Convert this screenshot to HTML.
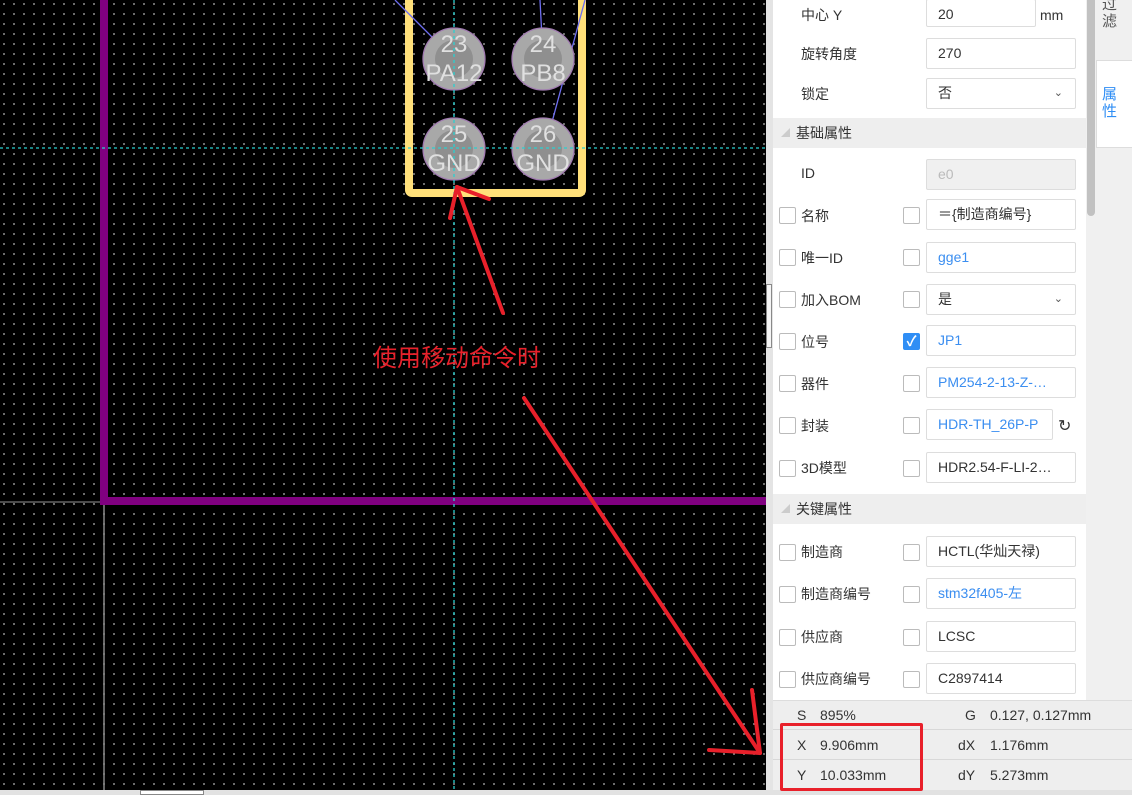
<!DOCTYPE html>
<html><head><meta charset="utf-8">
<style>
*{margin:0;padding:0;box-sizing:border-box}
body{width:1132px;height:795px;overflow:hidden;position:relative;background:#fff;font-family:"Liberation Sans","Noto Sans CJK SC",sans-serif;font-size:14px;color:#333}
#cv{position:absolute;left:0;top:0;width:766px;height:790px;background-color:#000;background-image:radial-gradient(circle,#8a8a8a 0.8px,transparent 1.1px);background-size:10px 10px;background-position:-1px -1px;overflow:hidden}
.abs{position:absolute}
.lbl{position:absolute;left:801px;font-size:14px;color:#333}
.cb{position:absolute;width:17px;height:17px;border:1px solid #bbb;border-radius:2px;background:#fff}
.inp{position:absolute;left:926px;width:150px;height:31px;border:1px solid #ddd;border-radius:2px;background:#fff;padding-left:11px;line-height:29px;font-size:14px;color:#333;white-space:nowrap;overflow:hidden}
.blue{color:#3b8ef0}
.sec{position:absolute;left:773px;width:313px;height:30px;background:#eee;line-height:30px;padding-left:23px;font-size:14px}
.sec:before{content:"";position:absolute;left:8px;top:10px;border-left:9px solid transparent;border-bottom:9px solid #ccc}
.chev{position:absolute;right:12px;top:0;font-size:11px;color:#555}
.st{position:absolute;font-size:14px;color:#333}
</style></head><body>
<div id="cv">
<svg width="766" height="790" style="position:absolute;left:0;top:0">
<line x1="0" y1="502" x2="104" y2="502" stroke="#999" stroke-width="1"/>
<line x1="104" y1="505" x2="104" y2="790" stroke="#888" stroke-width="1.5"/>
<polyline points="104,0 104,501 766,501" fill="none" stroke="#800080" stroke-width="8"/>
<rect x="409" y="-10" width="173" height="203" rx="3" fill="none" stroke="#ffe07a" stroke-width="8"/>
<line x1="395" y1="0" x2="452" y2="57" stroke="#6e6ef0" stroke-width="1.3"/>
<line x1="540" y1="0" x2="543" y2="58" stroke="#6e6ef0" stroke-width="1.3"/>
<line x1="585" y1="0" x2="545" y2="148" stroke="#6e6ef0" stroke-width="1.3"/>
<g fill="#a8a8a8" stroke="#a07ab0" stroke-width="1.3">
<circle cx="454" cy="59" r="31"/><circle cx="543" cy="59" r="31"/>
<circle cx="454" cy="149" r="31"/><circle cx="543" cy="149" r="31"/></g>
<g fill="#8f8f8f"><circle cx="454" cy="59" r="19"/><circle cx="543" cy="59" r="19"/>
<circle cx="454" cy="149" r="19"/><circle cx="543" cy="149" r="19"/></g>
<line x1="454" y1="0" x2="454" y2="790" stroke="#2ad0d0" stroke-width="1.3" stroke-dasharray="3,3"/>
<line x1="0" y1="148" x2="766" y2="148" stroke="#2ad0d0" stroke-width="1.3" stroke-dasharray="3,3"/>
<g fill="#e0e0e0" font-family="Liberation Sans,sans-serif" font-size="24" text-anchor="middle">
<text x="454" y="52">23</text><text x="454" y="81">PA12</text>
<text x="543" y="52">24</text><text x="543" y="81">PB8</text>
<text x="454" y="142">25</text><text x="454" y="171">GND</text>
<text x="543" y="142">26</text><text x="543" y="171">GND</text></g>
<g stroke="#e8202a" stroke-width="4" stroke-linecap="round" fill="none">
<line x1="503" y1="313" x2="457" y2="187"/>
<line x1="457" y1="187" x2="450" y2="218"/>
<line x1="457" y1="187" x2="489" y2="199"/>
<line x1="524" y1="398" x2="760" y2="753"/>
<line x1="760" y1="753" x2="752" y2="690"/>
<line x1="760" y1="753" x2="709" y2="750"/>
</g>
<text x="373" y="366" fill="#e8202a" font-family="Noto Sans CJK SC,sans-serif" font-size="24">使用移动命令时</text>
</svg>
</div>
<div class="abs" style="left:766px;top:0;width:7px;height:790px;background:#e4e4e4"></div>
<div class="abs" style="left:766px;top:284px;width:6px;height:64px;border:1px solid #888;background:#f4f4f4"></div>
<div class="abs" style="left:0;top:790px;width:1132px;height:5px;background:#e2e2e2"></div>
<div class="abs" style="left:140px;top:790px;width:64px;height:5px;border:1px solid #888;background:#fff"></div>

<div class="abs" style="left:773px;top:0;width:313px;height:700px;background:#fff"></div>
<div class="lbl" style="top:5px">中心 Y</div>
<div class="inp" style="width:110px;height:28px;top:-1px">20</div>
<div class="st" style="left:1040px;top:7px">mm</div>
<div class="lbl" style="top:44px">旋转角度</div>
<div class="inp" style="top:38px">270</div>
<div class="lbl" style="top:84px">锁定</div>
<div class="inp" style="top:78px">否<span class="chev">&#8964;</span></div>
<div class="sec" style="top:118px">基础属性</div>
<div class="lbl" style="top:165px">ID</div>
<div class="inp" style="top:159px;background:#f0f0f0;color:#bbb">e0</div>

<div class="cb" style="left:779px;top:207px"></div><div class="lbl" style="top:206px">名称</div><div class="cb" style="left:903px;top:207px"></div><div class="inp" style="top:199px">＝{制造商编号}</div>
<div class="cb" style="left:779px;top:249px"></div><div class="lbl" style="top:248px">唯一ID</div><div class="cb" style="left:903px;top:249px"></div><div class="inp blue" style="top:242px">gge1</div>
<div class="cb" style="left:779px;top:291px"></div><div class="lbl" style="top:290px">加入BOM</div><div class="cb" style="left:903px;top:291px"></div><div class="inp" style="top:284px">是<span class="chev">&#8964;</span></div>
<div class="cb" style="left:779px;top:333px"></div><div class="lbl" style="top:332px">位号</div><div class="cb" style="left:903px;top:333px;background:#2f8ef5;border-color:#2f8ef5;color:#fff;font-size:14px;line-height:15px;text-align:center;font-weight:bold">✓</div><div class="inp blue" style="top:325px">JP1</div>
<div class="cb" style="left:779px;top:375px"></div><div class="lbl" style="top:374px">器件</div><div class="cb" style="left:903px;top:375px"></div><div class="inp blue" style="top:367px">PM254-2-13-Z-…</div>
<div class="cb" style="left:779px;top:417px"></div><div class="lbl" style="top:416px">封装</div><div class="cb" style="left:903px;top:417px"></div><div class="inp blue" style="top:409px;width:127px">HDR-TH_26P-P</div><div class="st" style="left:1058px;top:416px;font-size:16px">&#8635;</div>
<div class="cb" style="left:779px;top:460px"></div><div class="lbl" style="top:458px">3D模型</div><div class="cb" style="left:903px;top:460px"></div><div class="inp" style="top:452px">HDR2.54-F-LI-2…</div>
<div class="sec" style="top:494px">关键属性</div>
<div class="cb" style="left:779px;top:544px"></div><div class="lbl" style="top:542px">制造商</div><div class="cb" style="left:903px;top:544px"></div><div class="inp" style="top:536px">HCTL(华灿天禄)</div>
<div class="cb" style="left:779px;top:586px"></div><div class="lbl" style="top:584px">制造商编号</div><div class="cb" style="left:903px;top:586px"></div><div class="inp blue" style="top:578px">stm32f405-左</div>
<div class="cb" style="left:779px;top:629px"></div><div class="lbl" style="top:627px">供应商</div><div class="cb" style="left:903px;top:629px"></div><div class="inp" style="top:621px">LCSC</div>
<div class="cb" style="left:779px;top:671px"></div><div class="lbl" style="top:669px">供应商编号</div><div class="cb" style="left:903px;top:671px"></div><div class="inp" style="top:663px">C2897414</div>

<div class="abs" style="left:1086px;top:0;width:10px;height:700px;background:#f0f0f0"></div>
<div class="abs" style="left:1087px;top:0;width:8px;height:216px;background:#c1c1c1;border-radius:0 0 4px 4px"></div>
<div class="abs" style="left:1096px;top:0;width:36px;height:790px;background:#f0f0f0"></div>
<div class="abs" style="left:1102px;top:-4px;width:16px;font-size:15px;line-height:17px;color:#555">过滤</div>
<div class="abs" style="left:1096px;top:60px;width:36px;height:88px;background:#fff;border:1px solid #ddd;border-right:none"></div>
<div class="abs" style="left:1102px;top:86px;width:16px;font-size:15px;line-height:17px;color:#2f8ef5">属性</div>

<div class="abs" style="left:773px;top:700px;width:359px;height:90px;background:#eee;border-top:1px solid #ddd"></div>
<div class="abs" style="left:773px;top:729px;width:359px;height:1px;background:#d8d8d8"></div>
<div class="abs" style="left:773px;top:759px;width:359px;height:1px;background:#d8d8d8"></div>
<div class="st" style="left:797px;top:707px">S</div><div class="st" style="left:820px;top:707px">895%</div>
<div class="st" style="left:965px;top:707px">G</div><div class="st" style="left:990px;top:707px">0.127, 0.127mm</div>
<div class="st" style="left:797px;top:737px">X</div><div class="st" style="left:820px;top:737px">9.906mm</div>
<div class="st" style="left:958px;top:737px">dX</div><div class="st" style="left:990px;top:737px">1.176mm</div>
<div class="st" style="left:797px;top:767px">Y</div><div class="st" style="left:820px;top:767px">10.033mm</div>
<div class="st" style="left:958px;top:767px">dY</div><div class="st" style="left:990px;top:767px">5.273mm</div>
<div class="abs" style="left:780px;top:723px;width:143px;height:68px;border:3px solid #e8202a;border-radius:2px"></div>
</body></html>
